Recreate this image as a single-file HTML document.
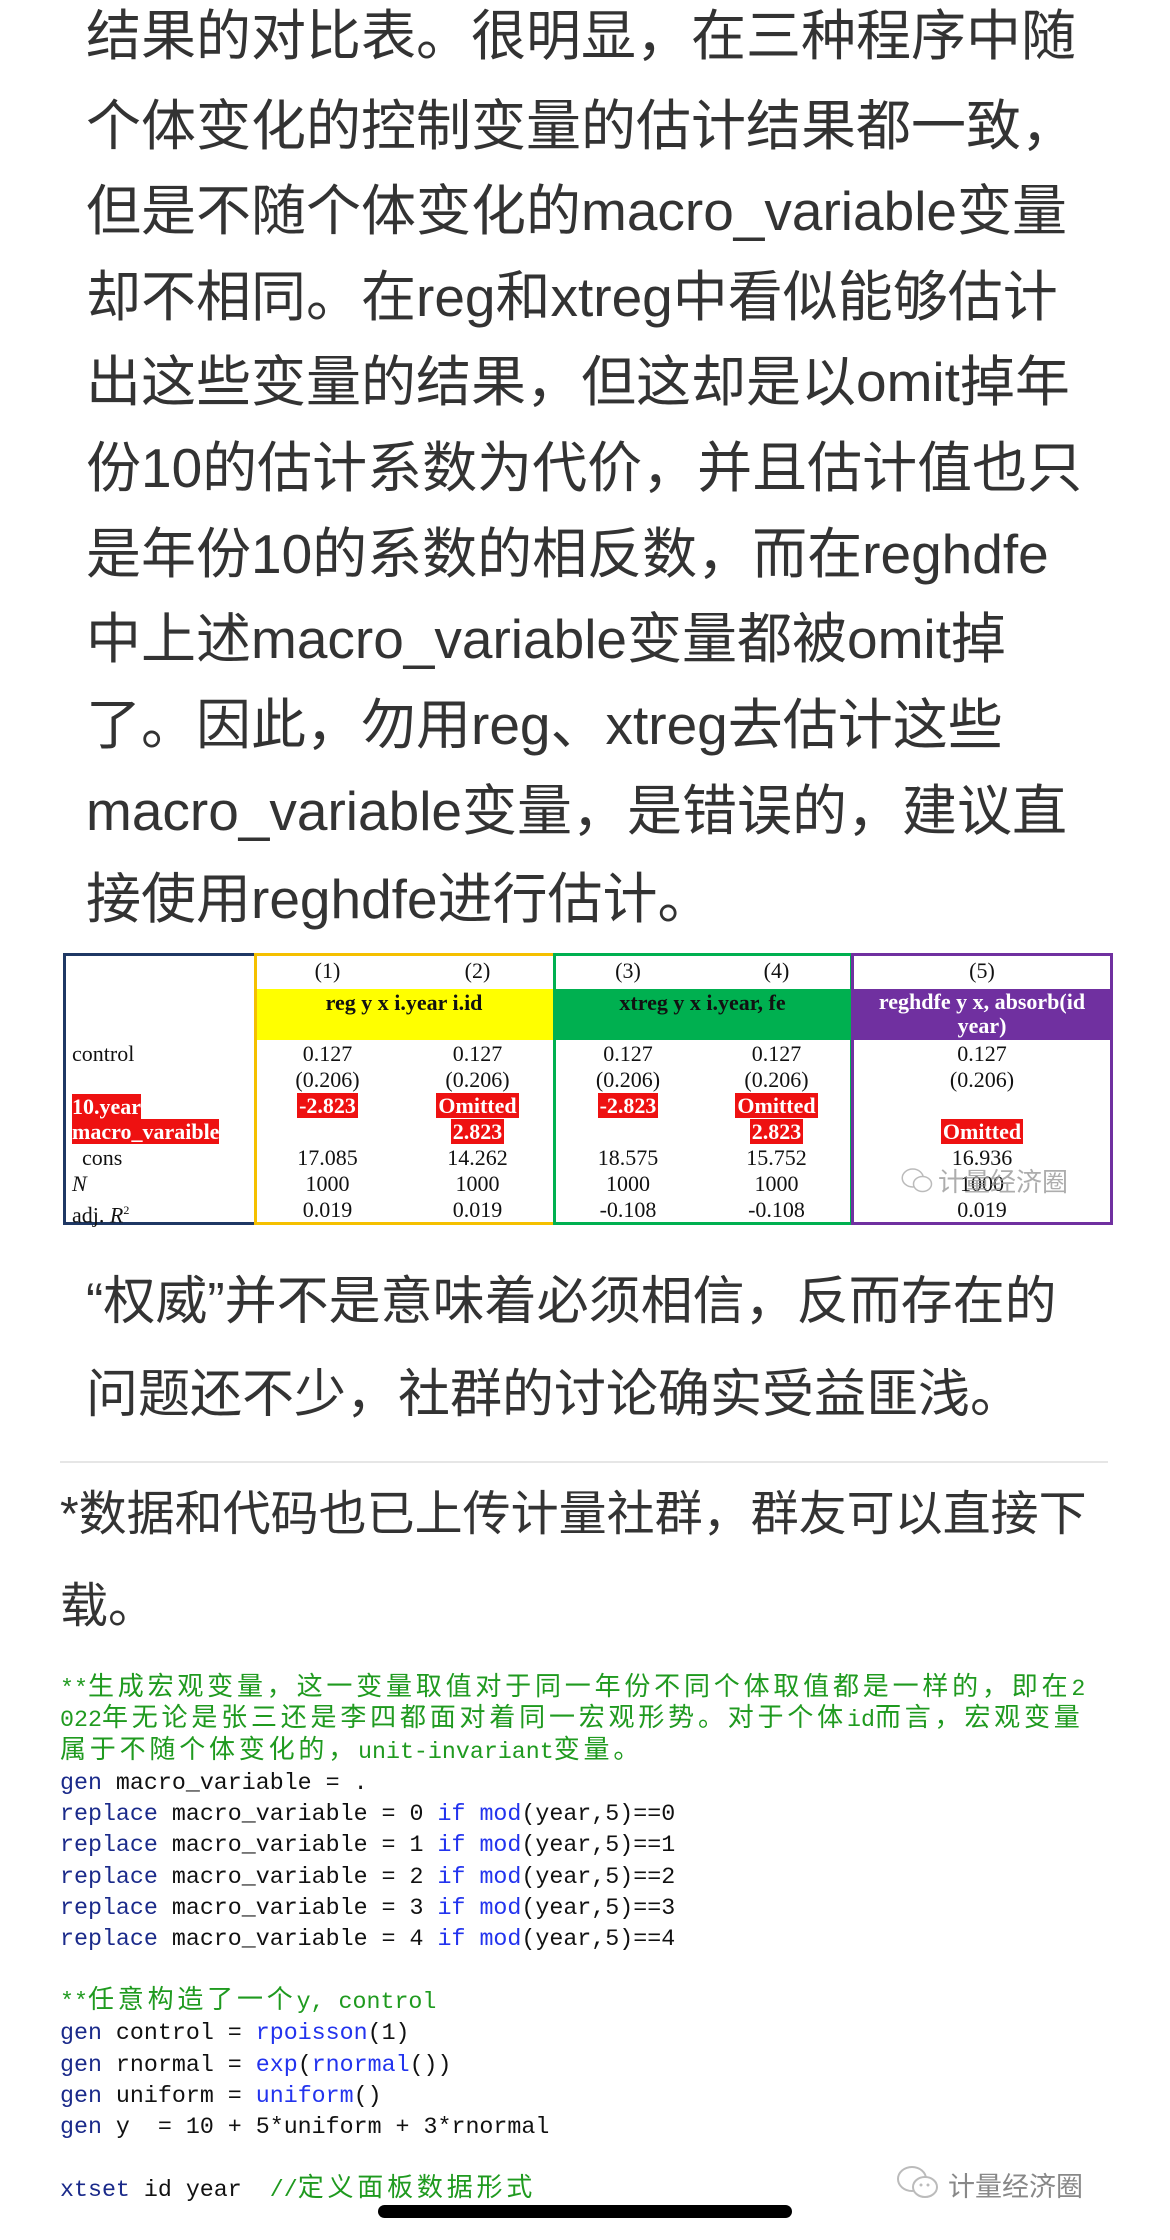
<!DOCTYPE html>
<html><head><meta charset="utf-8"><style>
body{margin:0;width:1170px;height:2240px;background:#fff;position:relative;overflow:hidden;font-family:"Liberation Sans","Noto Sans CJK SC",sans-serif;color:#333}
.l{position:absolute;left:86px;font-size:55px;height:86px;line-height:86px;white-space:nowrap}
.m{position:absolute;left:86px;font-size:52px;height:86px;line-height:86px;white-space:nowrap}
.s{position:absolute;left:60px;font-size:48px;height:90px;line-height:90px;white-space:nowrap}
.code{position:absolute;left:60px;top:1674px;font-family:"Liberation Mono","Noto Sans CJK SC",monospace;font-size:23.3px;color:#111}
.code div{height:31.3px;line-height:31.3px;white-space:pre;overflow:visible}
.c{color:#1f9a1f}
.c .z{font-family:"Noto Sans CJK SC",sans-serif;font-size:26px;letter-spacing:3.8px;line-height:0}
.k{color:#1a2a8a}.b{color:#2233ee}
.t{position:absolute;font-family:"Liberation Serif",serif;font-size:22px;color:#111;text-align:center;line-height:26px}
.red{background:#ee1111;color:#fff;padding:0 2px;font-weight:bold}
.box{position:absolute;box-sizing:border-box;border:3px solid}
</style></head><body>
<div class="l" style="top:-7px">结果的对比表。很明显，在三种程序中随</div>
<div class="l" style="top:83px">个体变化的控制变量的估计结果都一致，</div>
<div class="l" style="top:168px">但是不随个体变化的macro_variable变量</div>
<div class="l" style="top:254px">却不相同。在reg和xtreg中看似能够估计</div>
<div class="l" style="top:339px">出这些变量的结果，但这却是以omit掉年</div>
<div class="l" style="top:425px">份10的估计系数为代价，并且估计值也只</div>
<div class="l" style="top:511px">是年份10的系数的相反数，而在reghdfe</div>
<div class="l" style="top:596px">中上述macro_variable变量都被omit掉</div>
<div class="l" style="top:682px">了。因此，勿用reg、xtreg去估计这些</div>
<div class="l" style="top:768px">macro_variable变量，是错误的，建议直</div>
<div class="l" style="top:856px">接使用reghdfe进行估计。</div>

<!-- table -->
<div style="position:absolute;left:254px;top:989px;width:300px;height:51px;background:#ffff00"></div>
<div style="position:absolute;left:554px;top:989px;width:297px;height:51px;background:#00b050"></div>
<div style="position:absolute;left:851px;top:989px;width:262px;height:51px;background:#7030a0"></div>
<div class="box" style="left:63px;top:953px;width:194px;height:272px;border-color:#1f3864"></div>
<div class="box" style="left:254px;top:953px;width:302px;height:272px;border-color:#f5c000"></div>
<div class="box" style="left:553px;top:953px;width:300px;height:272px;border-color:#00b050"></div>
<div class="box" style="left:851px;top:953px;width:262px;height:272px;border-color:#7030a0"></div>
<div class="t" style="left:254px;top:958px;width:147px">(1)</div>
<div class="t" style="left:401px;top:958px;width:153px">(2)</div>
<div class="t" style="left:554px;top:958px;width:148px">(3)</div>
<div class="t" style="left:702px;top:958px;width:149px">(4)</div>
<div class="t" style="left:851px;top:958px;width:262px">(5)</div>
<div class="t" style="left:254px;top:990px;width:300px;font-weight:bold">reg y x i.year i.id</div>
<div class="t" style="left:554px;top:990px;width:297px;font-weight:bold">xtreg y x i.year, fe</div>
<div class="t" style="left:851px;top:990px;width:262px;font-weight:bold;color:#fff;line-height:24px">reghdfe y x, absorb(id<br>year)</div>
<div class="t" style="left:72px;top:1041px;text-align:left">control</div>
<div class="t" style="left:72px;top:1094px;text-align:left"><span class="red" style="padding:0">10.year</span></div>
<div class="t" style="left:72px;top:1119px;text-align:left"><span class="red" style="padding:0">macro_varaible</span></div>
<div class="t" style="left:82px;top:1145px;text-align:left">cons</div>
<div class="t" style="left:72px;top:1171px;text-align:left;font-style:italic">N</div>
<div class="t" style="left:72px;top:1197px;text-align:left">adj. <i>R</i><sup style="font-size:12px">2</sup></div>
<div class="t" style="left:254px;top:1041px;width:147px">0.127<br>(0.206)<br><span class="red">-2.823</span><br>&nbsp;<br>17.085<br>1000<br>0.019</div>
<div class="t" style="left:401px;top:1041px;width:153px">0.127<br>(0.206)<br><span class="red">Omitted</span><br><span class="red">2.823</span><br>14.262<br>1000<br>0.019</div>
<div class="t" style="left:554px;top:1041px;width:148px">0.127<br>(0.206)<br><span class="red">-2.823</span><br>&nbsp;<br>18.575<br>1000<br>-0.108</div>
<div class="t" style="left:702px;top:1041px;width:149px">0.127<br>(0.206)<br><span class="red">Omitted</span><br><span class="red">2.823</span><br>15.752<br>1000<br>-0.108</div>
<div class="t" style="left:851px;top:1041px;width:262px">0.127<br>(0.206)<br>&nbsp;<br><span class="red">Omitted</span><br>16.936<br>1000<br>0.019</div>
<svg style="position:absolute;left:900px;top:1166px" width="36" height="30" viewBox="0 0 48 40"><ellipse cx="17" cy="16" rx="14" ry="12" fill="none" stroke="#bbb" stroke-width="2"/><ellipse cx="30" cy="24" rx="12" ry="10" fill="#fff" stroke="#bbb" stroke-width="2"/></svg>
<div style="position:absolute;left:938px;top:1162px;font-size:26px;color:#999;font-family:'Noto Sans CJK SC',sans-serif;opacity:.8">计量经济圈</div>

<div class="m" style="top:1259px">“权威”并不是意味着必须相信，反而存在的</div>
<div class="m" style="top:1352px">问题还不少，社群的讨论确实受益匪浅。</div>
<div style="position:absolute;left:60px;top:1461px;width:1048px;height:2px;background:#e6e6e6"></div>
<div class="s" style="top:1470px">*数据和代码也已上传计量社群，群友可以直接下</div>
<div class="s" style="top:1562px">载。</div>

<div class="code">
<div class="c">**<span class="z">生成宏观变量，这一变量取值对于同一年份不同个体取值都是一样的，即在</span>2</div>
<div class="c">022<span class="z">年无论是张三还是李四都面对着同一宏观形势。对于个体</span>id<span class="z">而言，宏观变量</span></div>
<div class="c"><span class="z">属于不随个体变化的，</span>unit-invariant<span class="z">变量。</span></div>
<div><span class="k">gen</span> macro_variable = .</div>
<div><span class="k">replace</span> macro_variable = 0 <span class="b">if</span> <span class="b">mod</span>(year,5)==0</div>
<div><span class="k">replace</span> macro_variable = 1 <span class="b">if</span> <span class="b">mod</span>(year,5)==1</div>
<div><span class="k">replace</span> macro_variable = 2 <span class="b">if</span> <span class="b">mod</span>(year,5)==2</div>
<div><span class="k">replace</span> macro_variable = 3 <span class="b">if</span> <span class="b">mod</span>(year,5)==3</div>
<div><span class="k">replace</span> macro_variable = 4 <span class="b">if</span> <span class="b">mod</span>(year,5)==4</div>
<div> </div>
<div class="c">**<span class="z">任意构造了一个</span>y, control</div>
<div><span class="k">gen</span> control = <span class="b">rpoisson</span>(1)</div>
<div><span class="k">gen</span> rnormal = <span class="b">exp</span>(<span class="b">rnormal</span>())</div>
<div><span class="k">gen</span> uniform = <span class="b">uniform</span>()</div>
<div><span class="k">gen</span> y  = 10 + 5*uniform + 3*rnormal</div>
<div> </div>
<div><span class="k">xtset</span> id year  <span class="c">//<span class="z">定义面板数据形式</span></span></div>
</div>

<svg style="position:absolute;left:895px;top:2163px" width="48" height="40" viewBox="0 0 48 40"><ellipse cx="17" cy="16" rx="14" ry="12" fill="none" stroke="#bbb" stroke-width="2"/><ellipse cx="30" cy="24" rx="12" ry="10" fill="#fff" stroke="#bbb" stroke-width="2"/><circle cx="26" cy="22" r="1.5" fill="#bbb"/><circle cx="33" cy="22" r="1.5" fill="#bbb"/></svg>
<div style="position:absolute;left:948px;top:2165px;font-size:27px;color:#888;font-family:'Noto Sans CJK SC',sans-serif">计量经济圈</div>
<div style="position:absolute;left:378px;top:2205px;width:414px;height:13px;border-radius:7px;background:#000"></div>
</body></html>
